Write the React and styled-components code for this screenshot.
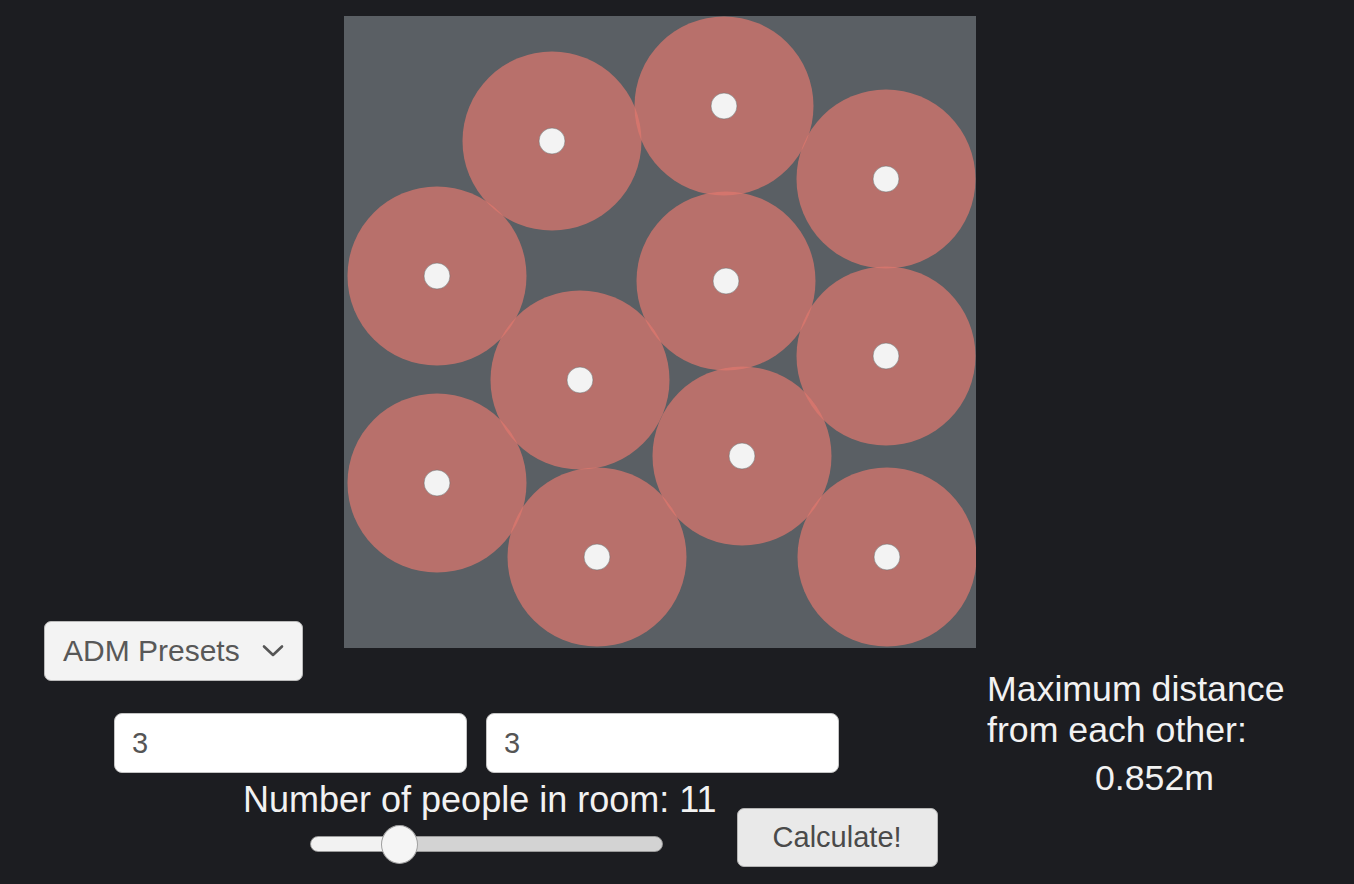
import React from "react";
import styled, { createGlobalStyle } from "styled-components";

const GlobalStyle = createGlobalStyle`
  html, body {
    margin: 0;
    background: #1c1d21;
  }
  body {
    font-family: "Liberation Sans", Arial, Helvetica, sans-serif;
    color: #f2f2f2;
  }
`;

const Page = styled.main`
  width: 1320px;
  padding-top: 16px;
  display: flex;
  flex-direction: column;
`;

const Stage = styled.section`
  display: flex;
  justify-content: center;
`;

const Room = styled.svg`
  display: block;
  width: 632px;
  height: 632px;
  background: #5a5f64;
`;

const Controls = styled.section`
  display: flex;
  margin-top: -27px;
  padding-left: 44px;
`;

const Settings = styled.div`
  display: flex;
  flex-direction: column;
  align-items: flex-start;
  width: 943px;
  flex-shrink: 0;
`;

const Dropdown = styled.button`
  display: flex;
  align-items: center;
  justify-content: space-between;
  box-sizing: border-box;
  width: 259px;
  height: 60px;
  padding: 0 18px 0 18px;
  border: 1px solid #b9b9b9;
  border-radius: 7px;
  background: #f3f3f3;
  color: #585858;
  font-family: inherit;
  font-size: 30px;
  white-space: nowrap;
  cursor: pointer;

  svg {
    flex-shrink: 0;
  }
`;

const Fields = styled.div`
  display: flex;
  gap: 19px;
  margin: 32px 0 0 70px;
`;

const Field = styled.input`
  box-sizing: border-box;
  width: 353px;
  height: 60px;
  padding: 0 17px;
  border: 1px solid #c4c4c4;
  border-radius: 8px;
  background: #ffffff;
  color: #555555;
  font-family: inherit;
  font-size: 29px;
  outline: none;
`;

const PeopleRow = styled.div`
  display: flex;
  align-items: flex-start;
  gap: 20px;
  margin: 7px 0 0 199px;
`;

const PeopleGroup = styled.div`
  display: flex;
  flex-direction: column;
  align-items: center;
  gap: 4px;
`;

const Label = styled.label`
  font-size: 36px;
  line-height: 40px;
  color: #f2f2f2;
  white-space: nowrap;
`;

const Range = styled.input.attrs({ type: "range" })`
  -webkit-appearance: none;
  appearance: none;
  width: 353px;
  height: 40px;
  margin: 0 0 0 14px;
  background: transparent;
  cursor: pointer;

  &::-webkit-slider-runnable-track {
    box-sizing: border-box;
    height: 16px;
    border: 1px solid #9a9a9a;
    border-radius: 8px;
    background: linear-gradient(
      to right,
      #f2f2f2 0%,
      #f2f2f2 var(--fill),
      #d3d3d3 var(--fill),
      #d3d3d3 100%
    );
  }

  &::-webkit-slider-thumb {
    -webkit-appearance: none;
    box-sizing: border-box;
    width: 37px;
    height: 39px;
    margin-top: -12.5px;
    border: 1px solid #a0a0a0;
    border-radius: 50%;
    background: #f5f5f5;
  }
`;

const CalcButton = styled.button`
  box-sizing: border-box;
  width: 201px;
  height: 59px;
  margin-top: 28px;
  border: 1px solid #b4b4b4;
  border-radius: 7px;
  background: #e9e9e9;
  color: #4a4a4a;
  font-family: inherit;
  font-size: 29px;
  cursor: pointer;
`;

const Result = styled.div`
  display: flex;
  flex-direction: column;
  margin-top: 48px;
  font-size: 35.7px;
  line-height: 41px;
  color: #f2f2f2;
  white-space: nowrap;
`;

const ResultValue = styled.div`
  margin-top: 7px;
  padding-left: 108px;
`;

const people = [
  [208, 125],
  [380, 90],
  [542, 163],
  [93, 260],
  [382, 265],
  [542, 340],
  [236, 364],
  [398, 440],
  [93, 467],
  [253, 541],
  [543, 541],
];

const Chevron = () => (
  <svg width="22" height="14" viewBox="0 0 22 14" aria-hidden="true">
    <polyline
      points="2,2.5 11,11 20,2.5"
      fill="none"
      stroke="#555"
      strokeWidth="2.6"
      strokeLinecap="round"
      strokeLinejoin="round"
    />
  </svg>
);

export default function App() {
  const count = 11;
  const min = 1;
  const max = 46;
  const fill = ((count - min) / (max - min)) * 100;

  return (
    <>
      <GlobalStyle />
      <Page>
        <Stage>
          <Room viewBox="0 0 632 632">
            {people.map(([x, y], i) => (
              <circle key={`r${i}`} cx={x} cy={y} r="89.5" fill="rgba(223,119,109,0.7)" />
            ))}
            {people.map(([x, y], i) => (
              <circle
                key={`p${i}`}
                cx={x}
                cy={y}
                r="13"
                fill="#f3f3f3"
                stroke="rgba(110,110,110,0.55)"
                strokeWidth="1"
              />
            ))}
          </Room>
        </Stage>
        <Controls>
          <Settings>
            <Dropdown>
              <span>ADM Presets</span>
              <Chevron />
            </Dropdown>
            <Fields>
              <Field defaultValue="3" />
              <Field defaultValue="3" />
            </Fields>
            <PeopleRow>
              <PeopleGroup>
                <Label>Number of people in room: {count}</Label>
                <Range
                  min={min}
                  max={max}
                  defaultValue={count}
                  style={{ "--fill": `${fill}%` }}
                />
              </PeopleGroup>
              <CalcButton>Calculate!</CalcButton>
            </PeopleRow>
          </Settings>
          <Result>
            <div>Maximum distance</div>
            <div>from each other:</div>
            <ResultValue>0.852m</ResultValue>
          </Result>
        </Controls>
      </Page>
    </>
  );
}
